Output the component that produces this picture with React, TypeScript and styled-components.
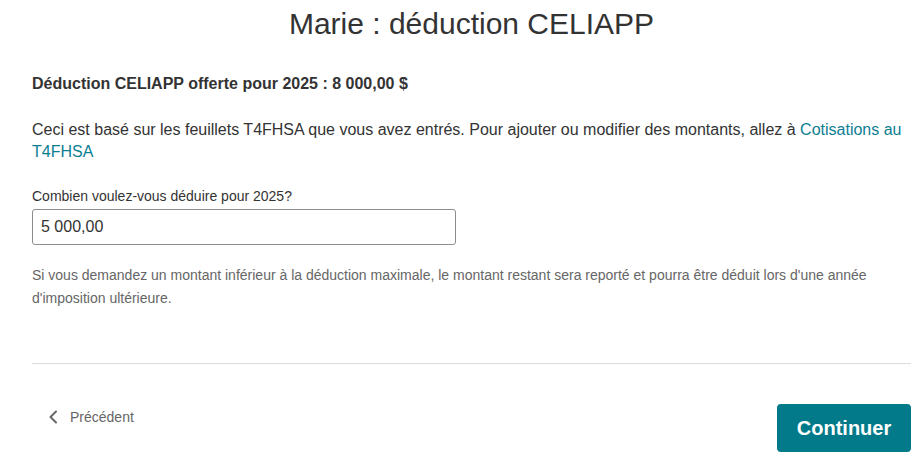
import React from "react";
import styled, { createGlobalStyle } from "styled-components";

const Global = createGlobalStyle`
  html, body { margin: 0; padding: 0; background: #fff; }
  body { font-family: "Liberation Sans", Arial, sans-serif; color: #333; }
  * { box-sizing: border-box; }
`;

const Page = styled.main`
  display: flex;
  flex-direction: column;
  padding: 6px 8px 0 32px;
  width: 919px;
`;

const Title = styled.h1`
  margin: 0;
  font-size: 30px;
  line-height: 36px;
  font-weight: 400;
  text-align: center;
  color: #333;
`;

const Heading = styled.h2`
  margin: 32px 0 0;
  font-size: 16px;
  line-height: 20px;
  font-weight: 700;
  color: #333;
`;

const Para = styled.p`
  margin: 25px 0 0;
  font-size: 16px;
  line-height: 22px;
  color: #333;
`;

const Link = styled.a`
  color: #0b7e93;
  text-decoration: none;
`;

const Label = styled.label`
  margin-top: 24px;
  font-size: 14px;
  line-height: 18px;
  color: #333;
`;

const Input = styled.input`
  margin-top: 4px;
  width: 424px;
  height: 36px;
  border: 1px solid #8d8d8d;
  border-radius: 3px;
  padding: 0 8px;
  font-family: "Liberation Sans", Arial, sans-serif;
  font-size: 16px;
  color: #333;
  outline: none;
`;

const Help = styled.p`
  margin: 19px 0 0;
  font-size: 14px;
  line-height: 23px;
  color: #666;
`;

const Divider = styled.hr`
  margin: 53px 0 0;
  border: 0;
  border-top: 1px solid #dcdcdc;
  height: 0;
`;

const Footer = styled.div`
  display: flex;
  justify-content: space-between;
  align-items: flex-start;
  margin-top: 40px;
`;

const Back = styled.a`
  display: flex;
  align-items: center;
  gap: 12px;
  margin: 4px 0 0 16px;
  font-size: 14px;
  line-height: 18px;
  color: #666;
  text-decoration: none;
`;

const Button = styled.button`
  width: 134px;
  height: 48px;
  border: 0;
  border-radius: 4px;
  background: #027a89;
  color: #fff;
  font-family: "Liberation Sans", Arial, sans-serif;
  font-size: 20px;
  font-weight: 700;
  cursor: pointer;
`;

export default function App() {
  return (
    <>
      <Global />
      <Page>
        <Title>Marie : déduction CELIAPP</Title>
        <Heading>Déduction CELIAPP offerte pour 2025 : 8 000,00 $</Heading>
        <Para>
          Ceci est basé sur les feuillets T4FHSA que vous avez entrés. Pour ajouter ou modifier des montants, allez à{" "}
          <Link href="#">Cotisations au T4FHSA</Link>
        </Para>
        <Label htmlFor="amt">Combien voulez-vous déduire pour 2025?</Label>
        <Input id="amt" defaultValue="5 000,00" />
        <Help>
          Si vous demandez un montant inférieur à la déduction maximale, le montant restant sera reporté et pourra être déduit lors d'une année d'imposition ultérieure.
        </Help>
        <Divider />
        <Footer>
          <Back href="#">
            <svg width="10" height="14" viewBox="0 0 10 14" fill="none">
              <path d="M8 1.5 L2.5 7 L8 12.5" stroke="#666" strokeWidth="2" strokeLinecap="round" strokeLinejoin="round" />
            </svg>
            Précédent
          </Back>
          <Button>Continuer</Button>
        </Footer>
      </Page>
    </>
  );
}
